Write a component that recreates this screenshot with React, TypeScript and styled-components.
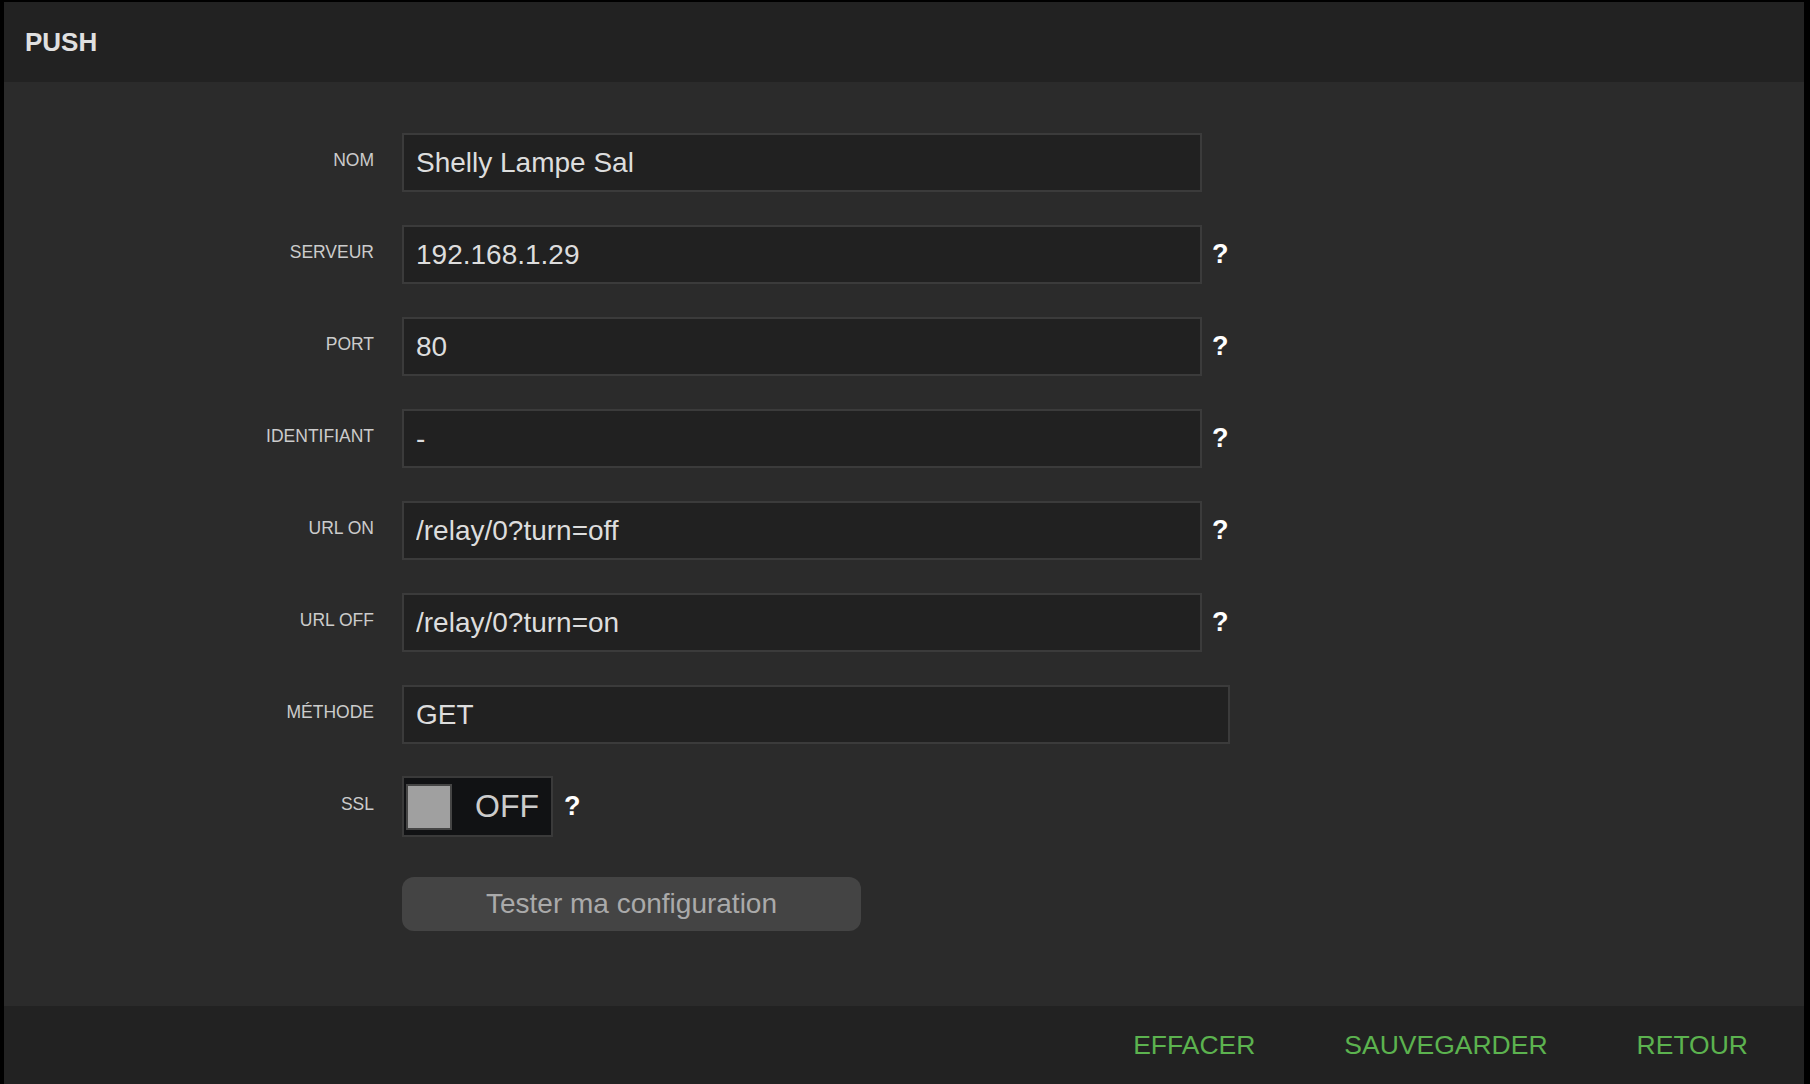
import { Fragment } from 'react';
import styled, { createGlobalStyle } from 'styled-components';

const GlobalStyle = createGlobalStyle`
  html, body {
    margin: 0;
    padding: 0;
    background: #000;
  }
  body {
    font-family: 'Liberation Sans', Arial, Helvetica, sans-serif;
  }
`;

const Frame = styled.div`
  margin: 2px 6px 0 4px;
  height: 1082px;
  display: flex;
  flex-direction: column;
  background: #2b2b2b;
`;

const Header = styled.header`
  height: 80px;
  flex: none;
  display: flex;
  align-items: center;
  padding-left: 21px;
  background: #222222;
`;

const Title = styled.h1`
  margin: 0;
  font-size: 26px;
  font-weight: 700;
  color: #e0e0e0;
`;

const Form = styled.div`
  flex: 1;
  display: grid;
  grid-template-columns: 370px 1fr;
  column-gap: 28px;
  row-gap: 33px;
  align-content: start;
  padding-top: 51px;
`;

const Label = styled.label`
  display: flex;
  align-items: center;
  justify-content: flex-end;
  font-size: 17.5px;
  color: #cccccc;
  padding-bottom: 4px;
`;

const Field = styled.div<{ $offset?: number }>`
  display: flex;
  align-items: center;
  gap: 10px;
  margin-top: ${(p) => p.$offset ?? 0}px;
`;

const TextInput = styled.input<{ $wide?: boolean }>`
  box-sizing: border-box;
  width: ${(p) => (p.$wide ? 828 : 800)}px;
  height: 59px;
  padding: 0 12px;
  border: 2px solid #3b3b3b;
  background: #212121;
  color: #dddddd;
  font-family: 'Liberation Sans', Arial, sans-serif;
  font-size: 28px;
  outline: none;
`;

const Help = styled.span<{ $gap?: number }>`
  margin-left: ${(p) => p.$gap ?? 0}px;
  font-size: 27px;
  font-weight: 700;
  color: #ffffff;
  line-height: 1;
`;

const Toggle = styled.div`
  box-sizing: border-box;
  width: 151px;
  height: 61px;
  margin: -1px 0;
  padding: 2px;
  display: flex;
  align-items: center;
  justify-content: space-between;
  border: 2px solid #3a3a3a;
  background: #111214;
`;

const Knob = styled.span`
  box-sizing: border-box;
  width: 46px;
  height: 46px;
  border: 2px solid #454545;
  background: #a0a0a0;
`;

const ToggleText = styled.span`
  padding-right: 10px;
  font-size: 32px;
  color: #cccccc;
`;

const TestButton = styled.button`
  width: 459px;
  height: 54px;
  border: none;
  border-radius: 12px;
  background: #444444;
  color: #aaaaaa;
  font-family: 'Liberation Sans', Arial, sans-serif;
  font-size: 28px;
  cursor: pointer;
`;

const Footer = styled.footer`
  height: 78px;
  flex: none;
  display: flex;
  align-items: center;
  justify-content: flex-end;
  gap: 89px;
  padding-right: 56px;
  background: #222222;
`;

const FooterAction = styled.button`
  padding: 0;
  border: none;
  background: none;
  color: #5cb34f;
  font-family: 'Liberation Sans', Arial, sans-serif;
  font-size: 26.5px;
  cursor: pointer;
`;

const fields = [
  { label: 'NOM', value: 'Shelly Lampe Sal', help: false },
  { label: 'SERVEUR', value: '192.168.1.29', help: true },
  { label: 'PORT', value: '80', help: true },
  { label: 'IDENTIFIANT', value: '-', help: true },
  { label: 'URL ON', value: '/relay/0?turn=off', help: true },
  { label: 'URL OFF', value: '/relay/0?turn=on', help: true },
];

export default function App() {
  return (
    <>
      <GlobalStyle />
      <Frame>
        <Header>
          <Title>PUSH</Title>
        </Header>
        <Form>
          {fields.map((f) => (
            <Fragment key={f.label}>
              <Label>{f.label}</Label>
              <Field>
                <TextInput defaultValue={f.value} />
                {f.help && <Help>?</Help>}
              </Field>
            </Fragment>
          ))}

          <Label>MÉTHODE</Label>
          <Field>
            <TextInput $wide defaultValue="GET" />
          </Field>

          <Label>SSL</Label>
          <Field>
            <Toggle>
              <Knob />
              <ToggleText>OFF</ToggleText>
            </Toggle>
            <Help $gap={1}>?</Help>
          </Field>

          <span />
          <Field $offset={8}>
            <TestButton>Tester ma configuration</TestButton>
          </Field>
        </Form>
        <Footer>
          <FooterAction>EFFACER</FooterAction>
          <FooterAction>SAUVEGARDER</FooterAction>
          <FooterAction>RETOUR</FooterAction>
        </Footer>
      </Frame>
    </>
  );
}
